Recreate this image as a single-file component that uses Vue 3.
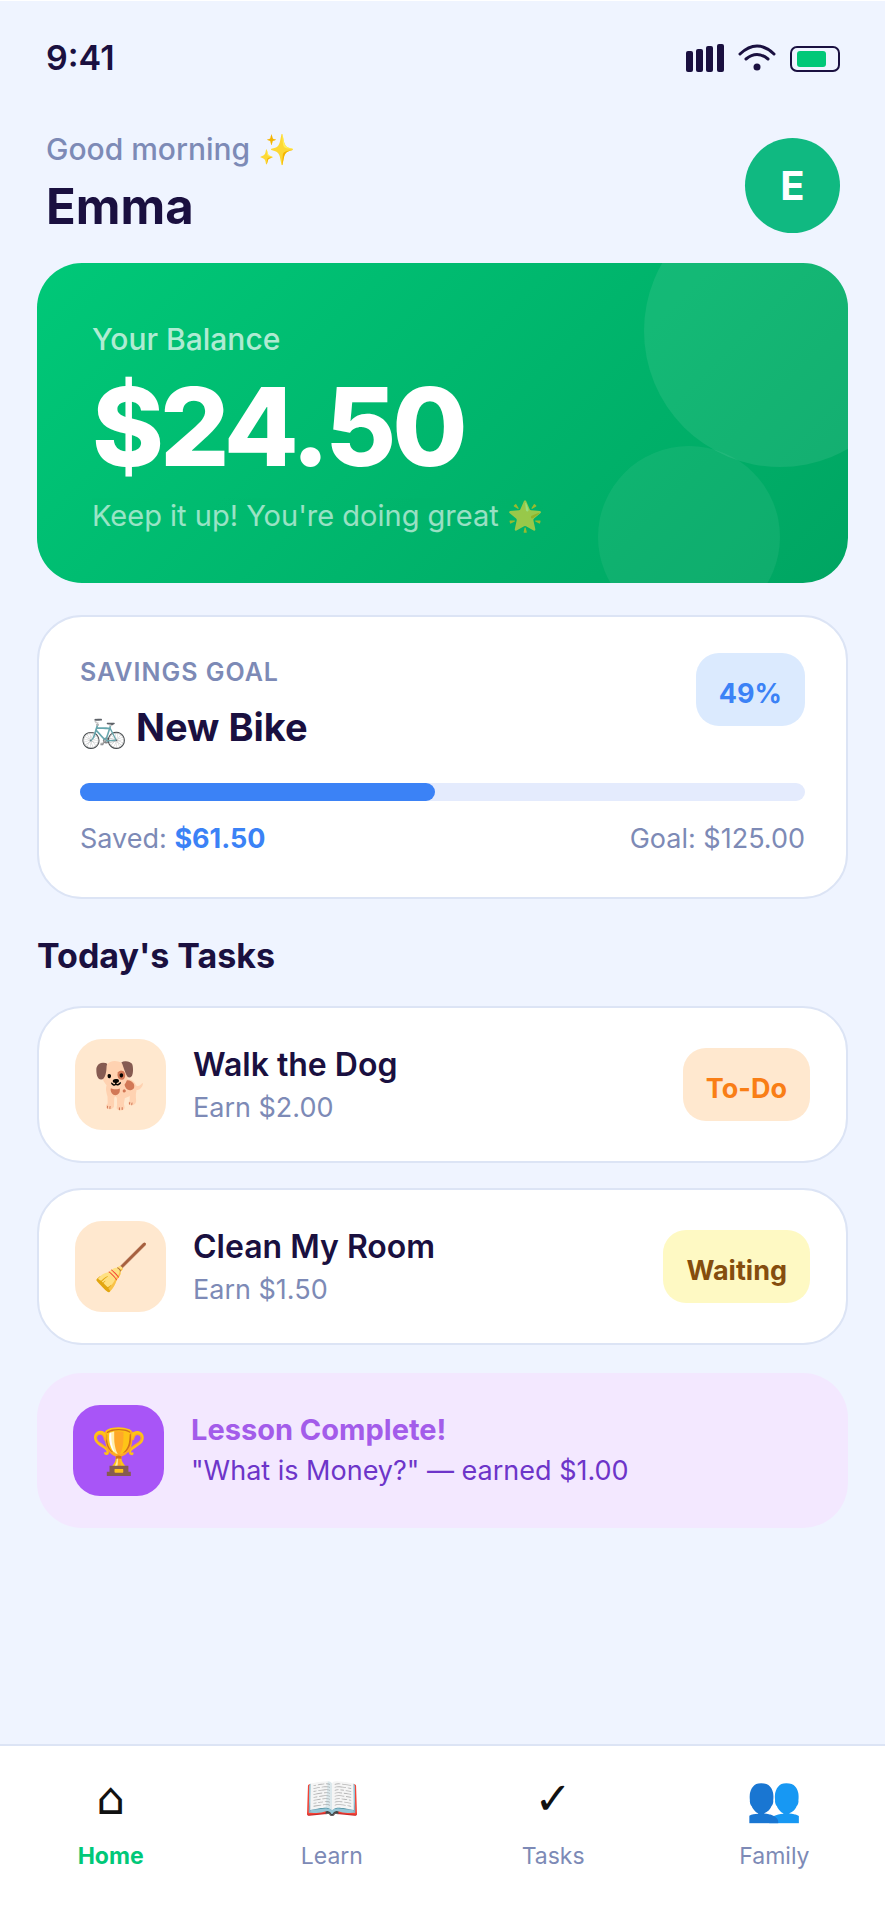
<script setup>
const tasks = [
  { icon: '🐕', title: 'Walk the Dog', reward: 'Earn $2.00', status: 'To-Do', tone: 'todo' },
  { icon: '🧹', title: 'Clean My Room', reward: 'Earn $1.50', status: 'Waiting', tone: 'waiting' },
]

const tabs = [
  { icon: '⌂', label: 'Home', active: true },
  { icon: '📖', label: 'Learn' },
  { icon: '✓', label: 'Tasks' },
  { icon: '👥', label: 'Family' },
]

const goal = { saved: 61.5, target: 125 }
const percent = Math.round((goal.saved / goal.target) * 100)
const money = (n) => '$' + n.toFixed(2)
</script>

<template>
  <div class="page">
    <div class="status">
      <span>9:41</span>
      <div class="status-icons">
        <svg width="38" height="28" viewBox="0 0 38 28" fill="#1a1040" aria-hidden="true">
          <rect x="0" y="7" width="7" height="21" rx="2" />
          <rect x="10" y="5" width="7" height="23" rx="2" />
          <rect x="20" y="2" width="7" height="26" rx="2" />
          <rect x="31" y="0" width="7" height="28" rx="2" />
        </svg>
        <svg width="38" height="28" viewBox="0 0 38 28" fill="none" stroke="#1a1040" stroke-width="3" stroke-linecap="round" aria-hidden="true">
          <path d="M2 10 Q19 -6 36 10" />
          <path d="M8 15 Q19 6 30 15" />
          <circle cx="19" cy="23" r="3.5" fill="#1a1040" stroke="none" />
        </svg>
        <svg width="50" height="26" viewBox="0 0 50 26" aria-hidden="true">
          <rect x="1" y="1" width="48" height="24" rx="6" fill="none" stroke="#1a1040" stroke-width="2" />
          <rect x="7" y="5" width="29" height="16" rx="3" fill="#00c878" />
        </svg>
      </div>
    </div>

    <header class="header">
      <div>
        <p class="greeting">Good morning ✨</p>
        <h1 class="name">Emma</h1>
      </div>
      <div class="avatar">E</div>
    </header>

    <main class="content">
      <section class="balance">
        <p class="balance-label">Your Balance</p>
        <p class="balance-amount">$24.50</p>
        <p class="balance-note">Keep it up! You're doing great 🌟</p>
      </section>

      <section class="goal">
        <div class="goal-head">
          <div class="goal-title">
            <p class="goal-label">SAVINGS GOAL</p>
            <h2 class="goal-name">🚲 New Bike</h2>
          </div>
          <span class="badge percent">{{ percent }}%</span>
        </div>
        <div class="track"><div class="fill" :style="{ width: percent + '%' }"></div></div>
        <div class="goal-foot">
          <span>Saved: <strong>{{ money(goal.saved) }}</strong></span>
          <span>Goal: {{ money(goal.target) }}</span>
        </div>
      </section>

      <h2 class="section-title">Today's Tasks</h2>
      <ul class="tasks">
        <li v-for="task in tasks" :key="task.title" class="task">
          <span class="tile">{{ task.icon }}</span>
          <div class="task-text">
            <h3 class="task-title">{{ task.title }}</h3>
            <p class="task-reward">{{ task.reward }}</p>
          </div>
          <span class="badge" :class="task.tone">{{ task.status }}</span>
        </li>
      </ul>

      <section class="lesson">
        <span class="tile trophy">🏆</span>
        <div>
          <h3 class="lesson-title">Lesson Complete!</h3>
          <p class="lesson-text">"What is Money?" — earned $1.00</p>
        </div>
      </section>
    </main>

    <nav class="nav">
      <a v-for="tab in tabs" :key="tab.label" href="#" class="tab" :class="{ active: tab.active }">
        <span class="tab-icon">{{ tab.icon }}</span>
        <span class="tab-label">{{ tab.label }}</span>
      </a>
    </nav>
  </div>
</template>

<style>
body {
  background: #eff4ff;
}
</style>

<style scoped>
.page {
  display: flex;
  flex-direction: column;
  box-sizing: border-box;
  min-height: 100vh;
  border-top: 1px solid #fff;
  background: #eff4ff;
  color: #1a1040;
  font-family: Inter, "Liberation Sans", sans-serif;
}
p, h1, h2, h3, ul {
  margin: 0;
  padding: 0;
}
.status {
  display: flex;
  justify-content: space-between;
  align-items: center;
  padding: 37px 45px 0 46px;
  font-size: 34px;
  line-height: 40px;
  font-weight: 600;
}
.status-icons {
  display: flex;
  align-items: flex-end;
  gap: 14px;
}
.header {
  display: flex;
  justify-content: space-between;
  align-items: center;
  padding: 54px 45px 24px 46px;
}
.greeting {
  margin-bottom: 9px;
  color: #7d8ab6;
  font-size: 30px;
  line-height: 34px;
  font-weight: 500;
}
.name {
  font-size: 49px;
  line-height: 64px;
  font-weight: 700;
}
.avatar {
  display: grid;
  place-items: center;
  width: 95px;
  height: 95px;
  border-radius: 50%;
  background: #10b981;
  color: #fff;
  font-size: 40px;
  font-weight: 700;
}
.content {
  padding: 0 37px;
}
.balance {
  position: relative;
  overflow: hidden;
  padding: 59px 55px 50px;
  border-radius: 45px;
  background: linear-gradient(135deg, #00c878, #00a562);
  color: #fff;
}
.balance::before,
.balance::after {
  content: "";
  position: absolute;
  border-radius: 50%;
}
.balance::before {
  top: -68px;
  right: -68px;
  width: 272px;
  height: 272px;
  background: rgba(255, 255, 255, 0.08);
}
.balance::after {
  right: 68px;
  bottom: -45px;
  width: 182px;
  height: 182px;
  background: rgba(255, 255, 255, 0.06);
}
.balance-label {
  color: rgba(255, 255, 255, 0.7);
  font-size: 30px;
  line-height: 34px;
  font-weight: 500;
}
.balance-amount {
  margin: 16px 0 19px;
  font-size: 109px;
  line-height: 108px;
  font-weight: 800;
  letter-spacing: -4px;
}
.balance-note {
  font-size: 29px;
  line-height: 34px;
  opacity: 0.6;
}
.goal {
  margin-top: 32px;
  padding: 36px 41px 41px;
  border: 2px solid #dce4f5;
  border-radius: 45px;
  background: #fff;
}
.goal-head {
  display: flex;
  justify-content: space-between;
  align-items: flex-start;
}
.goal-title {
  padding-top: 4px;
}
.goal-label {
  margin-bottom: 18px;
  color: #7d8ab6;
  font-size: 25px;
  line-height: 30px;
  font-weight: 600;
  letter-spacing: 1px;
}
.goal-name {
  font-size: 38px;
  line-height: 44px;
  font-weight: 700;
}
.badge {
  padding: 24px 23px 15px;
  border-radius: 23px;
  font-size: 27px;
  line-height: 34px;
  font-weight: 700;
}
.percent {
  background: #dbeafe;
  color: #3b82f6;
}
.todo {
  background: #ffe8cf;
  color: #f97e16;
}
.waiting {
  background: #fef9c3;
  color: #854d0e;
}
.track {
  height: 18px;
  margin-top: 34px;
  border-radius: 9px;
  background: #e4ebfd;
}
.fill {
  height: 100%;
  border-radius: 9px;
  background: #3b82f6;
}
.goal-foot {
  display: flex;
  justify-content: space-between;
  margin-top: 21px;
  color: #7d8ab6;
  font-size: 27px;
  line-height: 34px;
}
.goal-foot strong {
  color: #3b82f6;
  font-weight: 700;
}
.section-title {
  margin: 36px 0 29px;
  font-size: 34px;
  line-height: 42px;
  font-weight: 700;
}
.tasks {
  display: grid;
  gap: 25px;
  list-style: none;
}
.task {
  display: flex;
  align-items: center;
  gap: 27px;
  padding: 31px 36px;
  border: 2px solid #dce4f5;
  border-radius: 45px;
  background: #fff;
}
.tile {
  display: grid;
  place-items: center;
  flex: none;
  width: 91px;
  height: 91px;
  border-radius: 27px;
  background: #ffe8cf;
  font-size: 45px;
}
.trophy {
  background: #a855f7;
}
.task-text {
  flex: 1;
}
.task-title {
  margin-bottom: 4px;
  font-size: 32px;
  line-height: 42px;
  font-weight: 600;
}
.task-reward {
  color: #7d8ab6;
  font-size: 27px;
  line-height: 36px;
}
.lesson {
  display: flex;
  align-items: center;
  gap: 27px;
  margin-top: 28px;
  padding: 32px 36px;
  border-radius: 45px;
  background: #f3e8ff;
}
.lesson-title {
  margin-bottom: 5px;
  color: #a35cea;
  font-size: 29px;
  line-height: 36px;
  font-weight: 700;
}
.lesson-text {
  color: #6d35c9;
  font-size: 27px;
  line-height: 36px;
}
.nav {
  display: grid;
  grid-template-columns: repeat(4, 1fr);
  margin-top: auto;
  padding: 25px 0 49px;
  border-top: 2px solid #dce4f5;
  background: #fff;
}
.tab {
  display: flex;
  flex-direction: column;
  align-items: center;
  gap: 14px;
  color: #7d8ab6;
  text-decoration: none;
}
.tab-icon {
  color: #111;
  font-family: "DejaVu Sans", sans-serif;
  font-size: 45px;
  line-height: 56px;
}
.tab-label {
  font-size: 23px;
  line-height: 30px;
}
.active .tab-label {
  color: #00c878;
  font-weight: 700;
}
</style>
